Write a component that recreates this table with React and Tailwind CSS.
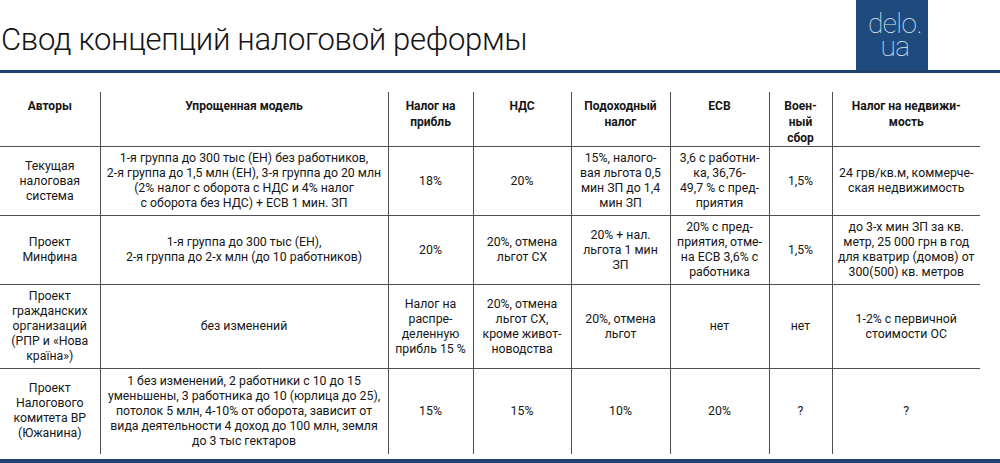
import React from "react";

const head = [
  "Авторы",
  "Упрощенная модель",
  "Налог на\nприбль",
  "НДС",
  "Подоходный\nналог",
  "ЕСВ",
  "Воен-\nный\nсбор",
  "Налог на недвижи-\nмость",
];

const rows = [
  {
    h: "h-[69px]",
    cells: [
      "Текущая\nналоговая\nсистема",
      "1-я группа до 300 тыс (ЕН) без работников,\n2-я группа до 1,5 млн (ЕН), 3-я группа до 20 млн\n(2% налог с оборота с НДС и 4% налог\nс оборота без НДС) + ЕСВ 1 мин. ЗП",
      "18%",
      "20%",
      "15%, налого-\nвая льгота 0,5\nмин ЗП до 1,4\nмин ЗП",
      "3,6 с работни-\nка, 36,76-\n49,7 % с пред-\nприятия",
      "1,5%",
      "24 грв/кв.м, коммерче-\nская недвижимость",
    ],
  },
  {
    h: "h-[69px]",
    cells: [
      "Проект\nМинфина",
      "1-я группа до 300 тыс (ЕН),\n2-я группа до 2-х млн (до 10 работников)",
      "20%",
      "20%, отмена\nльгот СХ",
      "20% + нал.\nльгота 1 мин\nЗП",
      "20% с пред-\nприятия, отме-\nна ЕСВ 3,6% с\nработника",
      "1,5%",
      "до 3-х мин ЗП за кв.\nметр, 25 000 грн в год\nдля кватрир (домов) от\n300(500) кв. метров",
    ],
  },
  {
    h: "h-[84px]",
    cells: [
      "Проект\nгражданских\nорганизаций\n(РПР и «Нова\nкраїна»)",
      "без изменений",
      "Налог на\nраспре-\nделенную\nприбль 15 %",
      "20%, отмена\nльгот СХ,\nкроме живот-\nноводства",
      "20%, отмена\nльгот",
      "нет",
      "нет",
      "1-2% с первичной\nстоимости ОС",
    ],
  },
  {
    h: "h-[85px]",
    cells: [
      "Проект\nНалогового\nкомитета ВР\n(Южанина)",
      "1 без изменений, 2 работники с 10 до 15\nуменьшены, 3 работника до 10 (юрлица до 25),\nпотолок 5 млн, 4-10% от оборота, зависит от\nвида деятельности 4 доход до 100 млн, земля\nдо 3 тыс гектаров",
      "15%",
      "15%",
      "10%",
      "20%",
      "?",
      "?",
    ],
  },
];

const widths = ["w-[100px]", "w-[288px]", "w-[85px]", "w-[98px]", "w-[99px]", "w-[99px]", "w-[63px]", "w-[148px]"];

function Logo() {
  return (
    <div className="w-[72px] h-[70px] bg-[#1f4a7e] flex justify-end pr-[6px] pt-[12px] text-[#dbe6f2] font-['Roboto'] font-thin">
      <span className="text-[28px] leading-[23px] tracking-[-0.5px] text-right whitespace-pre">{"delo.\nua  "}</span>
    </div>
  );
}

export default function App() {
  return (
    <div className="w-[1000px] h-[463px] bg-white overflow-hidden flex flex-col font-['Roboto',sans-serif] text-[#161616]">
      <div className="flex items-start border-b-[3px] border-[#1d426f] h-[73px]">
        <h1 className="flex-1 pt-[21px] pl-[1px] text-[31px] font-light leading-[38px] tracking-[-0.3px] text-[#141414]">
          Свод концепций налоговой реформы
        </h1>
        <Logo />
        <div className="w-[72px]" />
      </div>

      <table className="mt-[19px] w-[980px] table-fixed border-collapse text-center">
        <thead>
          <tr className="h-[54px] border-b-[1.5px] border-[#505050]">
            {head.map((t, i) => (
              <th
                key={i}
                className={`${widths[i]} align-top pt-[6px] text-[12px] font-bold leading-[16px] whitespace-pre-line ${i > 0 ? "border-l-[1.5px] border-[#505050]" : ""}`}
              >
                {t}
              </th>
            ))}
          </tr>
        </thead>
        <tbody>
          {rows.map((r, ri) => (
            <tr key={ri} className={`${r.h} ${ri < rows.length - 1 ? "border-b-[1.5px] border-[#505050]" : ""}`}>
              {r.cells.map((t, i) => (
                <td
                  key={i}
                  className={`align-middle text-[12.3px] leading-[15px] whitespace-pre-line ${i > 0 ? "border-l-[1.5px] border-[#505050]" : ""}`}
                >
                  {t}
                </td>
              ))}
            </tr>
          ))}
        </tbody>
      </table>

      <div className="mt-[5px] h-[6px] bg-[#1d426f]" />
    </div>
  );
}
